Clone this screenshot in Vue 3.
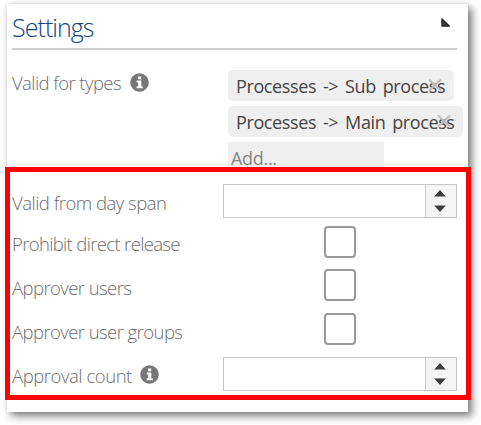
<script setup>
const types = [
  { text: 'Processes -> Sub process', size: 'sub' },
  { text: 'Processes -> Main process', size: 'main' },
]
const fields = [
  { label: 'Valid from day span', kind: 'number', cls: 'span' },
  { label: 'Prohibit direct release', kind: 'check', cls: 'release' },
  { label: 'Approver users', kind: 'check', cls: 'users' },
  { label: 'Approver user groups', kind: 'check', cls: 'groups' },
  { label: 'Approval count', kind: 'number', info: true, cls: 'count' },
]
</script>

<template>
  <div class="page">
    <section class="panel">
      <header class="header">
        <h1>Settings</h1>
        <svg class="collapse" width="10" height="10" viewBox="0 0 10 10">
          <path d="M1 1L8.3 8H1Z" fill="#444" stroke="#222" stroke-width="1.4" stroke-linejoin="round" />
        </svg>
      </header>

      <div class="types">
        <div class="label">
          <span class="text valid">Valid for types</span>
          <svg class="info" width="19" height="19" viewBox="0 0 19 19">
            <circle cx="9.5" cy="9.5" r="9.3" fill="#777" />
            <path d="M8 3.5h3.2v2.8H8zM6.7 7.6h4.6v5.6h1.4v2H6.7v-2h1.5V9.6H6.7z" fill="#fff" />
          </svg>
        </div>
        <div class="tags">
          <div v-for="t in types" :key="t.text" class="tag" :class="t.size">
            <span class="text">{{ t.text }}</span>
            <svg class="remove" width="14" height="12" viewBox="0 0 14 12">
              <path d="M1 .5L13 11.5M13 .5L1 11.5" stroke="#bbb" stroke-width="2" />
            </svg>
          </div>
          <div class="add"><span class="text">Add...</span></div>
        </div>
      </div>

      <div class="fields">
        <template v-for="f in fields" :key="f.label">
          <div class="label">
            <span class="text" :class="f.cls">{{ f.label }}</span>
            <svg v-if="f.info" class="info" width="19" height="19" viewBox="0 0 19 19">
              <circle cx="9.5" cy="9.5" r="9.3" fill="#777" />
              <path d="M8 3.5h3.2v2.8H8zM6.7 7.6h4.6v5.6h1.4v2H6.7v-2h1.5V9.6H6.7z" fill="#fff" />
            </svg>
          </div>
          <div v-if="f.kind === 'number'" class="number">
            <div class="spin">
              <svg width="12" height="22" viewBox="0 0 12 22">
                <path d="M6 0L11.8 6.5H.2ZM6 22L11.8 15.5H.2Z" fill="#3c3c3c" />
              </svg>
            </div>
          </div>
          <div v-else class="check"></div>
        </template>
      </div>
      <div class="highlight"></div>
    </section>
  </div>
</template>

<style>
body { margin: 0; background: #fff; overflow: hidden; }
</style>

<style scoped>
.page {
  box-sizing: border-box;
  width: 481px;
  height: 425px;
  padding: 4px 0 0 7px;
  font-family: "Open Sans", "Noto Sans", sans-serif;
  font-weight: 300;
}
.panel {
  position: relative;
  box-sizing: border-box;
  width: 461px;
  height: 408px;
  padding: 0 11px 0 5px;
  background: #fff;
  box-shadow: 4px 4px 8px rgba(0, 0, 0, .5), 0 0 5px rgba(0, 0, 0, .1);
}
.header {
  display: flex;
  justify-content: space-between;
  box-sizing: border-box;
  height: 46px;
  border-bottom: 2px solid #d0d0d0;
}
h1 {
  margin: 0;
  font-size: 25px;
  font-weight: 300;
  line-height: 46px;
  letter-spacing: -.95px;
  color: #0d477d;
}
.collapse { margin: 14px 6px 0 0; }
.types {
  display: grid;
  grid-template-columns: 216px 1fr;
  height: 134px;
}
.types .label { margin-top: 14px; }
.label {
  display: flex;
  align-items: center;
  height: 36px;
  font-size: 18.5px;
  letter-spacing: -.57px;
  color: #6c6c6c;
  white-space: nowrap;
}
.label .release { letter-spacing: -.65px; }
.label .count { letter-spacing: -.45px; }
.label .span { letter-spacing: -.5px; }
.info { flex: none; margin-left: 9px; }
.types .info { margin-top: 1px; }
.fields .info { margin-top: -2px; margin-left: 8px; }
.tags {
  display: flex;
  flex-direction: column;
  align-items: flex-start;
  gap: 5px;
  padding-top: 19.5px;
}
.tag {
  position: relative;
  box-sizing: border-box;
  height: 31px;
  padding-left: 8px;
  border-radius: 5px;
  background: #efefef;
  font-size: 18px;
  font-weight: 400;
  letter-spacing: -.38px;
  word-spacing: 2.5px;
  line-height: 32px;
  color: #444;
  white-space: nowrap;
}
.tag.sub { width: 226px; }
.tag.main { width: 235px; }
.remove { position: absolute; right: 12px; top: 9px; }
.add {
  box-sizing: border-box;
  width: 156px;
  height: 30px;
  padding-left: 3px;
  background: #efefef;
  font-size: 18px;
  font-weight: 400;
  letter-spacing: -.3px;
  line-height: 32px;
  color: #858585;
}
.fields {
  display: grid;
  grid-template-columns: 211px 234px;
  grid-template-rows: 41.5px 43.5px 44px 44px 35px;
  align-items: start;
  height: 208px;
}
.number {
  display: flex;
  justify-content: flex-end;
  box-sizing: border-box;
  width: 234px;
  height: 34px;
  border: 1.5px solid #c6c6c6;
  background: #fff;
}
.spin {
  display: flex;
  align-items: center;
  justify-content: center;
  box-sizing: border-box;
  width: 31px;
  padding-right: 2px;
  border-left: 1px solid #ccc;
  background: #f5f5f5;
}
.check {
  box-sizing: border-box;
  width: 32px;
  height: 32px;
  justify-self: start;
  margin-left: 101px;
  border: 2px solid #999;
  border-radius: 4px;
}
.highlight {
  position: absolute;
  left: -2px;
  top: 163px;
  box-sizing: border-box;
  width: 466px;
  height: 233px;
  border: 5px solid #f00;
}
</style>
